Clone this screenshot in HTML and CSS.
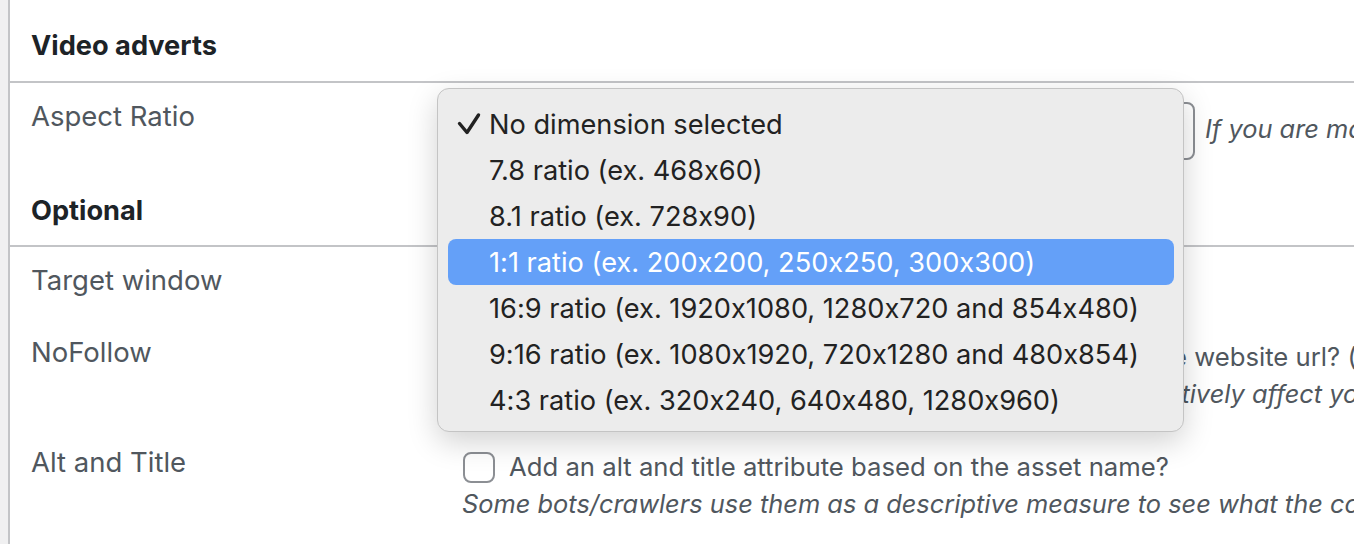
FILE: index.html
```html
<!DOCTYPE html>
<html lang="en">
<head>
    <meta charset="UTF-8">
    <meta name="viewport" content="width=device-width, initial-scale=1.0">
    <title>Advert settings</title>
    <link rel="stylesheet" href="styles.css">
</head>
<body>

    <div class="panel">
        <h2 class="section-title first">Video adverts</h2>

        <div class="row row-aspect">
            <div class="label">Aspect Ratio</div>
            <div class="field">
                <div class="select-wrap">
                    <div class="select"></div>
                    <ul class="menu">
                        <li class="menu-item checked">
                            <span class="check">
                                <svg width="24" height="24" viewBox="0 0 24 24"><polyline points="2.5,11.5 10,20.5 21.5,3" fill="none" stroke="#222" stroke-width="3.4" stroke-linecap="round" stroke-linejoin="round"/></svg>
                            </span>
                            No dimension selected
                        </li>
                        <li class="menu-item"><span class="check"></span>7.8 ratio (ex. 468x60)</li>
                        <li class="menu-item"><span class="check"></span>8.1 ratio (ex. 728x90)</li>
                        <li class="menu-item active"><span class="check"></span>1:1 ratio (ex. 200x200, 250x250, 300x300)</li>
                        <li class="menu-item"><span class="check"></span>16:9 ratio (ex. 1920x1080, 1280x720 and 854x480)</li>
                        <li class="menu-item"><span class="check"></span>9:16 ratio (ex. 1080x1920, 720x1280 and 480x854)</li>
                        <li class="menu-item"><span class="check"></span>4:3 ratio (ex. 320x240, 640x480, 1280x960)</li>
                    </ul>
                </div>
                <span class="hint">If you are making a video advert, pick the ratio of the video.</span>
            </div>
        </div>

        <h2 class="section-title">Optional</h2>

        <div class="row row-target">
            <div class="label">Target window</div>
            <div class="field">
                <div class="select small"></div>
            </div>
        </div>

        <div class="row row-check">
            <div class="label">NoFollow</div>
            <div class="field">
                <label class="checkbox-line"><span class="checkbox"></span>Add a rel='nofollow' attribute to all links that point to the website url? (recommended)</label>
                <p class="description">Search engines may see them as paid links which can negatively affect your rankings.</p>
            </div>
        </div>

        <div class="row row-check">
            <div class="label">Alt and Title</div>
            <div class="field">
                <label class="checkbox-line"><span class="checkbox"></span>Add an alt and title attribute based on the asset name?</label>
                <p class="description">Some bots/crawlers use them as a descriptive measure to see what the content is about.</p>
            </div>
        </div>
    </div>

</body>
</html>
```

FILE: styles.css
```css
body {
    margin: 0;
    background-color: #f0f0f1;
    font-family: Inter, "Noto Sans", sans-serif;
    font-feature-settings: "calt" 0;
    color: #50575e;
    overflow: hidden;
    height: 544px;
}
.panel {
    margin-left: 8px;
    border-left: 2px solid #c3c4c7;
    background: white;
    height: 544px;
    white-space: nowrap;
}
.section-title {
    margin: 0;
    padding: 14px 21px 16px;
    font-size: 27.2px;
    line-height: 36px;
    font-weight: 700;
    color: #1d2327;
    border-bottom: 2px solid #c3c4c7;
}
.section-title.first {
    padding-top: 28px;
    padding-bottom: 17px;
}
.row {
    display: flex;
}
.label {
    width: 431px;
    padding: 15px 0 0 21px;
    font-size: 27.5px;
    line-height: 36px;
    flex-shrink: 0;
}
.field {
    display: flex;
    align-items: flex-start;
    font-size: 25.7px;
}
.row-aspect .field {
    padding: 19px 0;
}
.row-target .field {
    padding: 7px 0;
}
.row-check .field {
    flex-direction: column;
    padding: 20px 0 16px;
}
.select-wrap {
    position: relative;
}
.select {
    width: 733px;
    height: 58px;
    box-sizing: border-box;
    border: 2px solid #8c8f94;
    border-radius: 8px;
    background: white;
}
.select.small {
    width: 420px;
}
.hint {
    margin-left: 10px;
    line-height: 58px;
    font-size: 25.4px;
    font-style: italic;
    margin-top: -2px;
}
.menu {
    position: absolute;
    top: -14px;
    left: -25px;
    z-index: 10;
    width: 747px;
    box-sizing: border-box;
    margin: 0;
    padding: 12px 9px 8px 10px;
    list-style: none;
    background: #ececec;
    border: 1px solid #c4c4c4;
    border-radius: 12px;
    box-shadow: 0 10px 30px rgba(0, 0, 0, 0.18);
    color: #222;
}
.menu-item {
    display: flex;
    align-items: center;
    height: 46px;
    border-radius: 8px;
    font-size: 27.2px;
}
.menu-item.active {
    background: #64a0f8;
    color: white;
}
.check {
    width: 41px;
    padding-left: 9px;
    box-sizing: border-box;
    display: flex;
    align-items: center;
}
.checkbox-line {
    display: flex;
    align-items: center;
    line-height: 36px;
}
.checkbox {
    width: 32px;
    height: 31px;
    box-sizing: border-box;
    border: 2px solid #8c8f94;
    border-radius: 8px;
    margin: 0 14px 0 1px;
    flex-shrink: 0;
}
.description {
    margin: 0;
    line-height: 38px;
    font-size: 25.4px;
    font-style: italic;
}
```
